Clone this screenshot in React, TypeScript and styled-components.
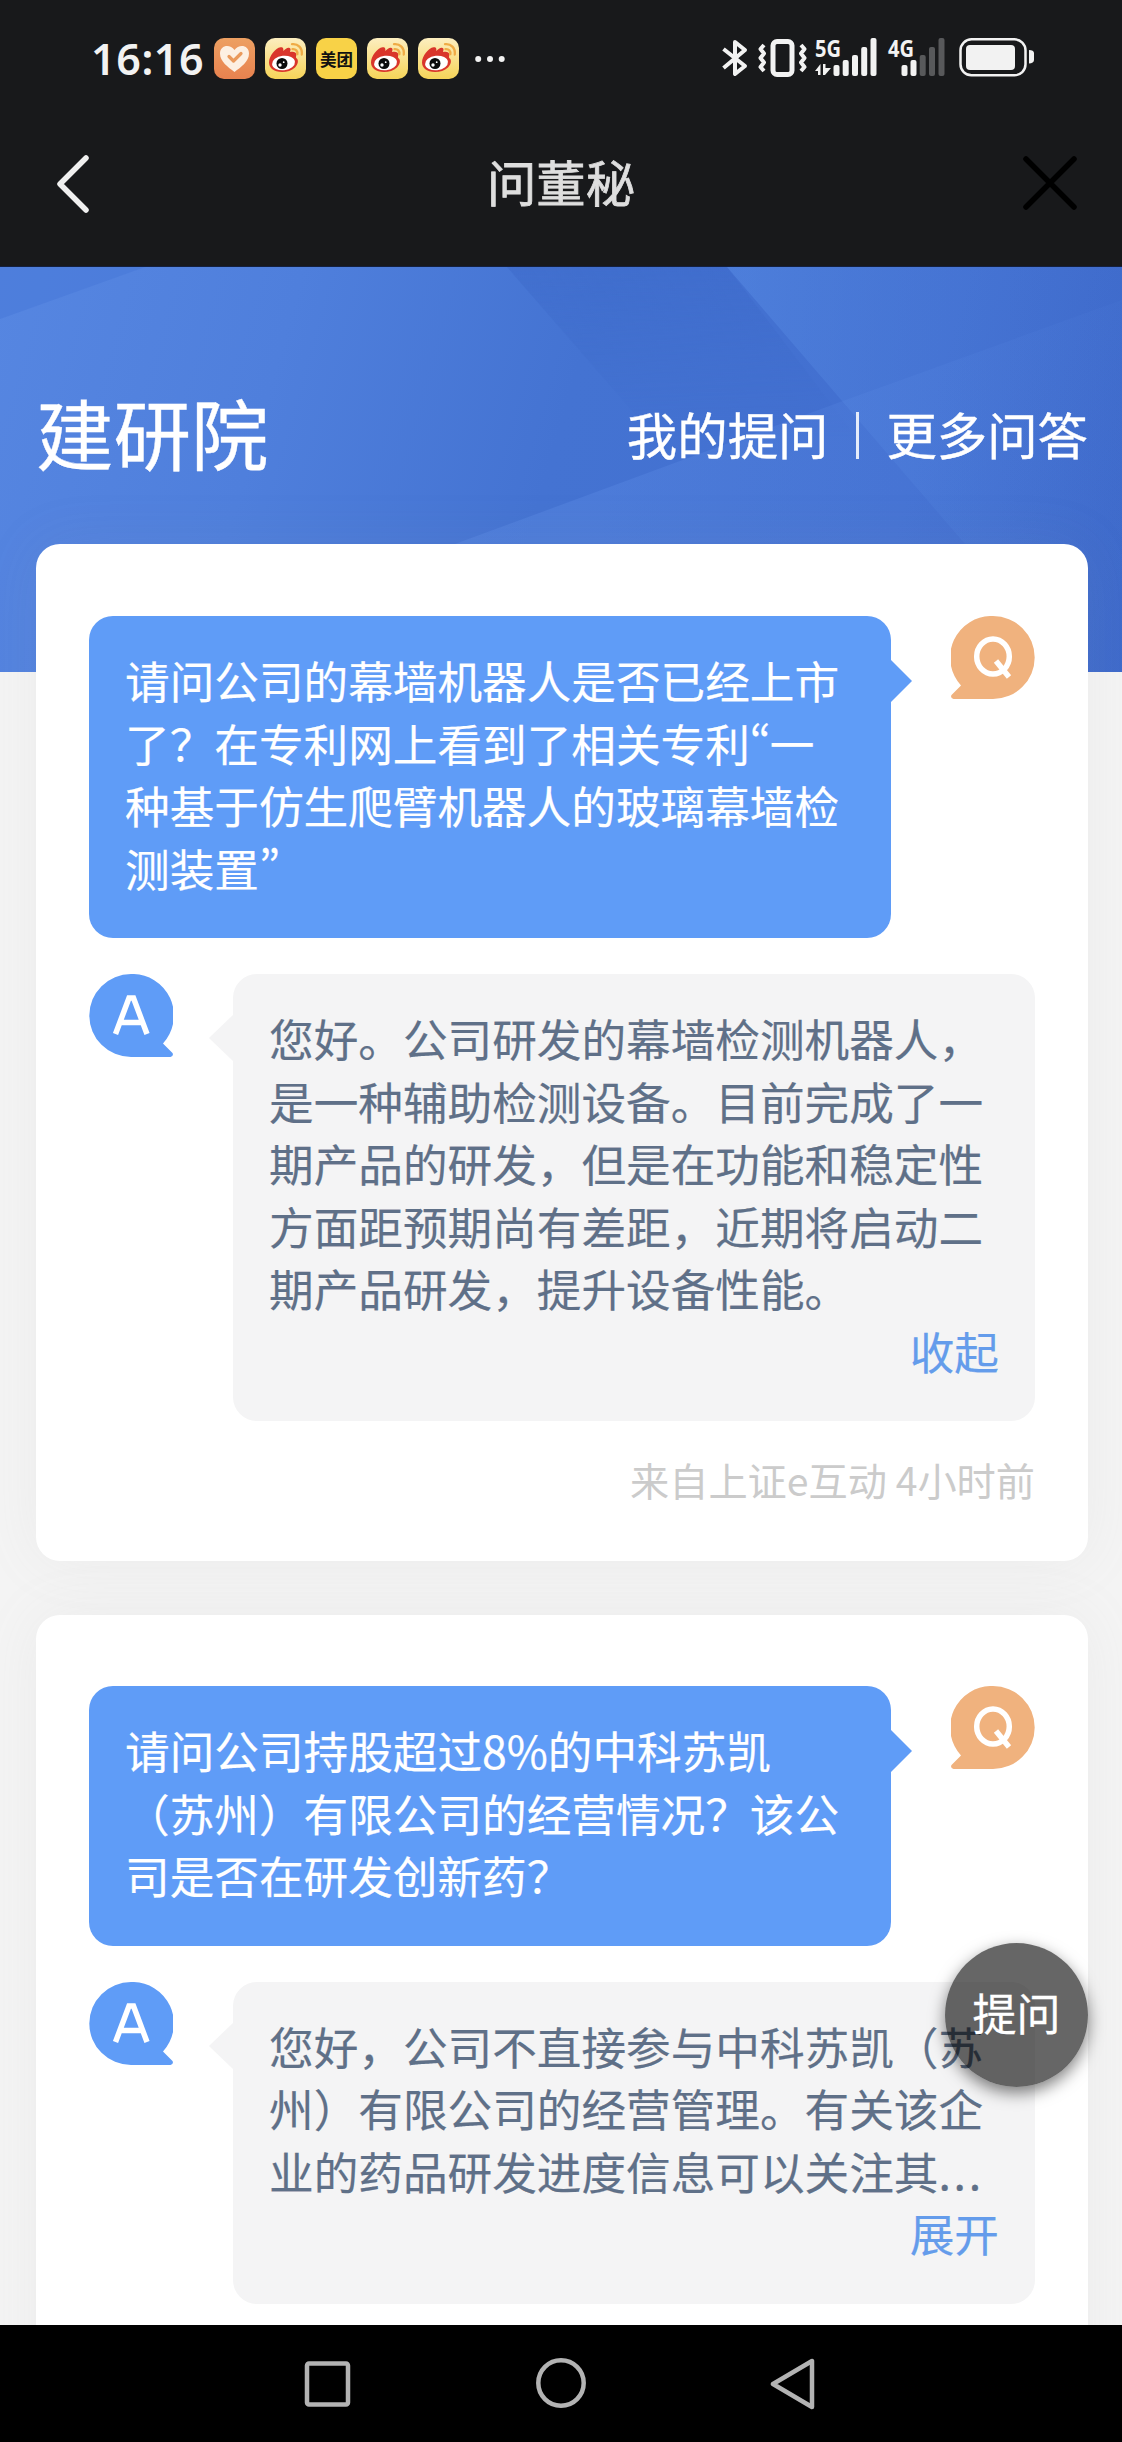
import React from "react";
import styled, { createGlobalStyle, css } from "styled-components";

const Global = createGlobalStyle`
  * { box-sizing: border-box; }
  html, body { margin: 0; padding: 0; background: #f4f4f4; }
  body { font-family: "Noto Sans CJK SC", "Noto Sans", sans-serif; }
  button { font: inherit; border: 0; padding: 0; background: none; }
`;

const Screen = styled.div`
  width: 1122px;
  height: 2442px;
  display: flex;
  flex-direction: column;
  overflow: hidden;
  position: relative;
`;

const StatusBar = styled.header`
  height: 115px;
  flex: none;
  background: #18191b;
  color: #f2f2f2;
  display: flex;
  justify-content: space-between;
  padding: 28px 86px 0 91px;
`;

const StatusGroup = styled.div`
  display: flex;
  align-items: center;
  height: 41px;
  gap: 10px;
  margin-top: 10px;
`;

const Clock = styled.span`
  font: 600 43px/41px "Noto Sans", sans-serif;
  letter-spacing: 0.6px;
  width: 113px;
  white-space: nowrap;
`;

const AppTile = styled.span<{ $bg: string }>`
  width: 41px;
  height: 41px;
  border-radius: 10px;
  background: ${(p) => p.$bg};
  display: flex;
  align-items: center;
  justify-content: center;
`;

const MeituanText = styled.span`
  font-size: 16.5px;
  line-height: 24px;
  font-weight: 700;
  color: #111;
  white-space: nowrap;
`;

const TitleBar = styled.div`
  height: 152px;
  flex: none;
  background: #18191b;
  border-bottom: 1px solid #14203f;
  display: grid;
  grid-template-columns: 1fr auto 1fr;
  align-items: center;
  padding: 0 44px 15px;
`;

const PageTitle = styled.h1`
  margin: 0 0 5px;
  font-size: 49.4px;
  line-height: 60px;
  font-weight: 400;
  -webkit-text-stroke: 0.8px #dedede;
  color: #dedede;
`;

const IconButton = styled.button<{ $end?: boolean }>`
  display: flex;
  justify-self: ${(p) => (p.$end ? "end" : "start")};
  margin-left: ${(p) => (p.$end ? 0 : 10)}px;
`;

const Content = styled.main`
  flex: 1;
  min-height: 0;
  overflow: hidden;
  display: grid;
  grid-template-columns: 100%;
  grid-template-rows: 405px 1fr;
`;

const HeroArt = styled.svg`
  grid-area: 1 / 1;
  display: block;
`;

const Stack = styled.div`
  grid-area: 1 / 1 / 3 / 2;
  display: flex;
  flex-direction: column;
  gap: 54px;
  padding: 0 34px 0 36px;
  z-index: 1;
`;

const HeroRow = styled.div`
  height: 223px;
  flex: none;
  display: flex;
  justify-content: space-between;
  align-items: center;
  padding-top: 111px;
  color: #fff;
`;

const Company = styled.h2`
  margin: 0 0 7px;
  font-size: 77.5px;
  line-height: 100px;
  font-weight: 400;
  -webkit-text-stroke: 0.4px #fff;
`;

const HeroLinks = styled.nav`
  display: flex;
  align-items: center;
  font-size: 50.4px;
  line-height: 60px;
  -webkit-text-stroke: 0.4px #fff;
`;

const LinkDivider = styled.span`
  width: 3px;
  height: 47px;
  background: #e5ecfa;
  margin: 3px 27.5px 0;
`;

const Card = styled.article`
  background: #fff;
  border-radius: 24px;
  box-shadow: 0 0 60px rgba(160, 160, 160, 0.09);
  padding: 72px 53px 0;
  display: flex;
  flex-direction: column;
  gap: 36px;
  flex: none;
  height: 1017px;

  & + & {
    padding-top: 71px;
  }
`;

const Message = styled.div`
  display: flex;
  justify-content: space-between;
  align-items: flex-start;
`;

const Bubble = styled.div<{ $kind: "q" | "a" }>`
  width: 802px;
  padding: 33px 36px 39px;
  border-radius: 24px;
  position: relative;
  font-size: 44.64px;
  line-height: 62.5px;
  white-space: nowrap;
  -webkit-text-stroke: 0.2px currentColor;

  &::after {
    content: "";
    position: absolute;
    border: solid transparent;
  }

  ${(p) =>
    p.$kind === "q"
      ? css`
          background: #5f9cf7;
          color: #fff;
          &::after {
            left: 802px;
            top: 44px;
            border-width: 21px 0 21px 21px;
            border-left-color: #5f9cf7;
          }
        `
      : css`
          background: #f4f4f5;
          color: #5f7088;
          &::after {
            right: 802px;
            top: 41px;
            border-width: 23px 24px 23px 0;
            border-right-color: #f4f4f5;
          }
        `}
`;

const Line = styled.div`
  height: 62.5px;
`;

const Quote = styled.span`
  display: inline-block;
  width: 20px;
  font-feature-settings: "pwid" 1;
`;

const Ellipsis = styled.span`
  letter-spacing: 2.8px;
`;

const Toggle = styled.button`
  display: block;
  margin-left: auto;
  height: 62.5px;
  color: #649ceb;
`;

const Source = styled.footer`
  margin-top: -6px;
  text-align: right;
  font-size: 39.2px;
  line-height: 56px;
  color: #cbcbcb;
`;

const AskButton = styled.button`
  position: absolute;
  left: 945px;
  top: 1943px;
  width: 143px;
  height: 144px;
  border-radius: 50%;
  background: rgba(0, 0, 0, 0.6);
  box-shadow: 0 6px 16px rgba(0, 0, 0, 0.5);
  color: #fff;
  font-size: 44px;
  line-height: 60px;
  padding-bottom: 6px;
  -webkit-text-stroke: 0.3px #fff;
  z-index: 2;
`;

const NavBar = styled.nav`
  height: 117px;
  flex: none;
  background: #000;
  display: flex;
  justify-content: center;
  align-items: flex-start;
  padding: 33px 0 0;
  gap: 182px;
`;

const Heart = () => (
  <svg width="33" height="31" viewBox="0 0 33 31">
    <path d="M16.5 29C10 24 2 18.500 2 10.500C2 2 12 .5 16.500 7C21 .5 31 2 31 10.500C31 18.500 23 24 16.500 29Z" fill="#fdf0e2" />
    <path d="M11 13.500L15.500 18L23 10.500" fill="none" stroke="#ea9a5c" strokeWidth="3.200" strokeLinecap="round" strokeLinejoin="round" />
  </svg>
);

const Weibo = () => (
  <svg width="41" height="41" viewBox="0 0 41 41">
    <path d="M4 24.500C4 18 10.500 10 15.500 9.300C18.500 9 18.500 11 18.300 13C20.500 11 22.500 9.300 24.500 10C26.300 10.700 25.300 12.500 25 14C27.500 13.300 31.500 13.300 31.300 17C31.200 18.500 30.500 19 31.500 20.200C34 22 33 26.500 30 29.500C24 35.300 12 35.300 7 31C5 29.300 4 27 4 24.500Z" fill="#d9352b" />
    <ellipse cx="18.500" cy="25" rx="11.500" ry="7.300" fill="#fff" transform="rotate(-6 18.5 25)" />
    <circle cx="17" cy="25.500" r="5.500" fill="#0b0b0b" />
    <circle cx="15" cy="27" r="1.700" fill="#fff" />
    <circle cx="18.700" cy="24.200" r="0.900" fill="#fff" />
    <path d="M27 6.200C33 5.500 37.500 10 36.800 16.500M27.500 11.200C30.800 10.900 32.800 13 32.300 16.200" fill="none" stroke="#efab45" strokeWidth="2.300" strokeLinecap="round" />
  </svg>
);

const MoreDots = styled.svg`
  margin-left: 6px;
`;

const SignalLabel = styled.text`
  font: 700 23px "Open Sans", sans-serif;
  fill: #f2f2f2;
`;

const StatusIcons = () => (
  <svg width="314" height="61" viewBox="0 -10 314 61" fill="none" stroke="#f2f2f2" strokeLinejoin="round">
    <path d="M1.500 11L23 28L13 36V4L23 12L1.500 30" strokeWidth="4" />
    <rect x="51" y="3.500" width="19" height="33" rx="4" strokeWidth="5" />
    <path d="M42 7L38.500 11L42 15.500L38.500 20L42 24.500L38.500 29L42 33M79 7L82.500 11L79 15.500L82.500 20L79 24.500L82.500 29L79 33" strokeWidth="4" />
    <g stroke="none" fill="#f2f2f2">
      <SignalLabel x="93" y="18.500" textLength="26" lengthAdjust="spacingAndGlyphs">5G</SignalLabel>
      <path d="M93 33L98.500 26V37H96V33ZM101 26H103.500V30H109L103 37H101Z" />
      <rect x="111.500" y="27" width="6" height="11" rx="2" />
      <rect x="120.700" y="22" width="6" height="16" rx="2" />
      <rect x="130" y="17" width="6" height="21" rx="2" />
      <rect x="139.200" y="9" width="6" height="29" rx="2" />
      <rect x="148.500" y="0" width="6" height="38" rx="2" />
      <SignalLabel x="166" y="18.500" textLength="26" lengthAdjust="spacingAndGlyphs">4G</SignalLabel>
      <rect x="179.500" y="27" width="6" height="11" rx="2" />
      <rect x="188.500" y="22" width="6" height="16" rx="2" />
      <g fill="#58595b">
        <rect x="197.700" y="17" width="6" height="21" rx="2" />
        <rect x="207" y="9" width="6" height="29" rx="2" />
        <rect x="216.500" y="0" width="6" height="38" rx="2" />
      </g>
      <rect x="244" y="7" width="49" height="25" rx="4" />
      <path d="M307 12C310 12 312 13 312 15V22C312 24 310 25.500 307 25.500Z" />
    </g>
    <rect x="238.500" y="1.300" width="65" height="36" rx="11" strokeWidth="2.500" />
  </svg>
);

const Hero = () => (
  <HeroArt width="1122" height="405" viewBox="0 0 1122 405">
    <defs>
      <linearGradient id="base" x1="0" y1="0" x2="1122" y2="320" gradientUnits="userSpaceOnUse">
        <stop offset="0" stopColor="#5686e1" />
        <stop offset=".25" stopColor="#4f7fdc" />
        <stop offset=".5" stopColor="#4473d2" />
        <stop offset=".8" stopColor="#426fd0" />
        <stop offset="1" stopColor="#3c67c8" />
      </linearGradient>
      <linearGradient id="band" x1="560" y1="60" x2="790" y2="-70" gradientUnits="userSpaceOnUse">
        <stop offset="0" stopColor="#3a66c6" stopOpacity=".4" />
        <stop offset="1" stopColor="#3a66c6" stopOpacity=".3" />
      </linearGradient>
      <linearGradient id="fade" x1="0" y1="0" x2="0" y2="1">
        <stop offset="0" stopColor="#fff" />
        <stop offset="1" stopColor="#000" />
      </linearGradient>
      <mask id="bandMask"><rect width="1122" height="170" fill="url(#fade)" /></mask>
      <linearGradient id="right" x1="740" y1="60" x2="1122" y2="100" gradientUnits="userSpaceOnUse">
        <stop offset="0" stopColor="#5a8ee6" stopOpacity=".42" />
        <stop offset="1" stopColor="#4a7bd8" stopOpacity=".1" />
      </linearGradient>
      <linearGradient id="lower" x1="600" y1="200" x2="1122" y2="250" gradientUnits="userSpaceOnUse">
        <stop offset="0" stopColor="#5d8ce6" stopOpacity=".35" />
        <stop offset="1" stopColor="#5b8be6" stopOpacity=".05" />
      </linearGradient>
    </defs>
    <rect width="1122" height="405" fill="url(#base)" />
    <path d="M0 0H145L0 52Z" fill="#4576d6" opacity=".45" />
    <path d="M507 0H727L856 170H655Z" fill="url(#band)" mask="url(#bandMask)" />
    <path d="M727 0H1122V405H1070L965 277Z" fill="url(#right)" />
    <path d="M1122 33L843 134L455 277V405H1122Z" fill="url(#lower)" />
  </HeroArt>
);

const Avatar = ({ kind }: { kind: "Q" | "A" }) => (
  <svg width="84" height="84" viewBox="0 0 84 84">
    <g transform={kind === "A" ? "matrix(-1 0 0 1 84 0)" : undefined}>
      <path
        d="M42 0A41.700 41.500 0 0 1 42 83H2.500Q-1 82 .5 79L10 69.500A41.500 41.500 0 0 1 42 0Z"
        fill={kind === "Q" ? "#f0b27e" : "#5f9cf7"}
      />
    </g>
    {kind === "Q" ? (
      <g fill="none" stroke="#fff" strokeWidth="5.500">
        <ellipse cx="42" cy="40.500" rx="16.300" ry="17.500" />
        <path d="M45 45L58 61" />
      </g>
    ) : (
      <path d="M26.500 60L40 24H44.500L58 60M31.500 48.500H53" fill="none" stroke="#fff" strokeWidth="5.500" />
    )}
  </svg>
);

type Item = {
  question: React.ReactNode[];
  answer: React.ReactNode[];
  toggle: string;
  source?: string;
};

const items: Item[] = [
  {
    question: [
      "请问公司的幕墙机器人是否已经上市",
      <>了？在专利网上看到了相关专利<Quote>“</Quote>一</>,
      "种基于仿生爬臂机器人的玻璃幕墙检",
      <>测装置<Quote>”</Quote></>,
    ],
    answer: [
      "您好。公司研发的幕墙检测机器人，",
      "是一种辅助检测设备。目前完成了一",
      "期产品的研发，但是在功能和稳定性",
      "方面距预期尚有差距，近期将启动二",
      "期产品研发，提升设备性能。",
    ],
    toggle: "收起",
    source: "来自上证e互动 4小时前",
  },
  {
    question: ["请问公司持股超过8%的中科苏凯", "（苏州）有限公司的经营情况？该公", "司是否在研发创新药？"],
    answer: [
      "您好，公司不直接参与中科苏凯（苏",
      "州）有限公司的经营管理。有关该企",
      <>业的药品研发进度信息可以关注其<Ellipsis>...</Ellipsis></>,
    ],
    toggle: "展开",
  },
];

const QaCard = ({ item }: { item: Item }) => (
  <Card>
    <Message>
      <Bubble $kind="q">
        {item.question.map((l, i) => <Line key={i}>{l}</Line>)}
      </Bubble>
      <Avatar kind="Q" />
    </Message>
    <Message>
      <Avatar kind="A" />
      <Bubble $kind="a">
        {item.answer.map((l, i) => <Line key={i}>{l}</Line>)}
        <Toggle>{item.toggle}</Toggle>
      </Bubble>
    </Message>
    {item.source && <Source>{item.source}</Source>}
  </Card>
);

export default function App() {
  return (
    <Screen>
      <Global />
      <StatusBar>
        <StatusGroup>
          <Clock>16:16</Clock>
          <AppTile $bg="linear-gradient(#eda062, #e8824f)"><Heart /></AppTile>
          <AppTile $bg="linear-gradient(#fceec0, #f6d458)"><Weibo /></AppTile>
          <AppTile $bg="#f8d247"><MeituanText>美团</MeituanText></AppTile>
          <AppTile $bg="linear-gradient(#fceec0, #f6d458)"><Weibo /></AppTile>
          <AppTile $bg="linear-gradient(#fceec0, #f6d458)"><Weibo /></AppTile>
          <MoreDots width="30" height="8" viewBox="0 0 30 8" fill="#f2f2f2">
            <circle cx="3.200" cy="4" r="3" />
            <circle cx="15" cy="4" r="3" />
            <circle cx="26.700" cy="4" r="3" />
          </MoreDots>
        </StatusGroup>
        <StatusIcons />
      </StatusBar>
      <TitleBar>
        <IconButton aria-label="返回">
          <svg width="38" height="60" viewBox="0 0 38 60" fill="none" stroke="#f0f0f0" strokeWidth="5.500" strokeLinecap="round" strokeLinejoin="round">
            <path d="M32 5L6 31L32 57" />
          </svg>
        </IconButton>
        <PageTitle>问董秘</PageTitle>
        <IconButton $end aria-label="关闭">
          <svg width="56" height="56" viewBox="0 0 56 56" stroke="#000" strokeWidth="5.500" strokeLinecap="round">
            <path d="M4 4L52 52M52 4L4 52" />
          </svg>
        </IconButton>
      </TitleBar>
      <Content>
        <Hero />
        <Stack>
          <HeroRow>
            <Company>建研院</Company>
            <HeroLinks>
              <span>我的提问</span>
              <LinkDivider />
              <span>更多问答</span>
            </HeroLinks>
          </HeroRow>
          {items.map((item) => <QaCard key={item.toggle} item={item} />)}
        </Stack>
      </Content>
      <AskButton>提问</AskButton>
      <NavBar>
        <svg width="50" height="54" viewBox="0 0 50 54" fill="none" stroke="#b3b3b3" strokeWidth="4.500">
          <rect x="4" y="5.500" width="41" height="41" rx="2" />
        </svg>
        <svg width="52" height="54" viewBox="0 0 52 54" fill="none" stroke="#b3b3b3" strokeWidth="4.500">
          <circle cx="26" cy="25" r="22.700" />
        </svg>
        <svg width="50" height="54" viewBox="0 0 50 54" fill="none" stroke="#b3b3b3" strokeWidth="4.500" strokeLinejoin="round">
          <path d="M4 26L43 3V49Z" />
        </svg>
      </NavBar>
    </Screen>
  );
}
